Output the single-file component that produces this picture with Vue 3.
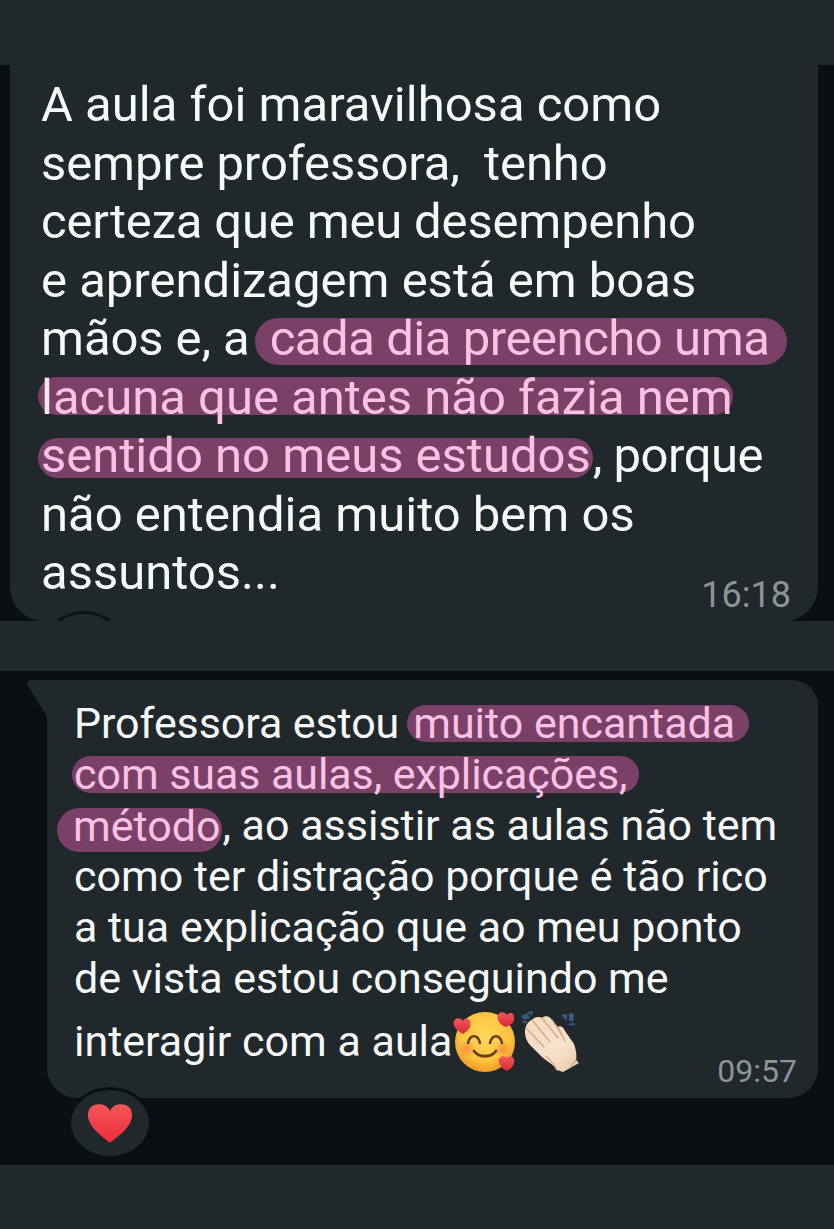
<script setup>
const firstLines = [
  { parts: [{ t: 'A aula foi maravilhosa como' }] },
  { parts: [{ t: 'sempre professora,  tenho' }], fit: 'tight-s' },
  { parts: [{ t: 'certeza que meu desempenho' }], fit: 'tight-m' },
  { parts: [{ t: 'e aprendizagem está em boas' }] },
  { parts: [{ t: 'mãos e, a', fit: 'tight-s' }, { t: 'cada dia preencho uma', h: 'p-cada' }] },
  { parts: [{ lead: 'l', t: 'acuna que antes não fazia nem', h: 'p-lacuna' }] },
  { parts: [{ t: 'sentido no meus estudos', h: 'p-sentido' }, { t: ', porque', fit: 'tight-l' }] },
  { parts: [{ t: 'não entendia muito bem os' }] },
  { parts: [{ t: 'assuntos...' }] }
]
const secondLines = [
  { parts: [{ t: 'Professora estou', fit: 'tight-s' }, { t: 'muito encantada', h: 'p-muito' }] },
  { parts: [{ t: 'com suas aulas, explicações,', h: 'p-com' }] },
  { parts: [{ t: 'método', h: 'p-metodo' }, { t: ', ao assistir as aulas não tem' }] },
  { parts: [{ t: 'como ter distração porque é tão rico' }] },
  { parts: [{ t: 'a tua explicação que ao meu ponto' }] },
  { parts: [{ t: 'de vista estou conseguindo me' }] }
]
</script>

<template>
  <div class="page">
    <div class="band top"></div>

    <section class="chat one">
      <div class="bubble first">
        <p v-for="(line, i) in firstLines" :key="i" class="line" :class="line.fit">
          <span v-for="(part, j) in line.parts" :key="j" :class="[part.h ? 'pill' : 'plain', part.h, part.fit]"><span v-if="part.lead" class="lead">{{ part.lead }}</span>{{ part.t }}</span>
        </p>
        <span class="time big">16:18</span>
        <span class="arc"></span>
      </div>
    </section>

    <div class="band middle"></div>

    <section class="chat two">
      <svg class="tail" viewBox="0 0 22 40" width="22" height="40" aria-hidden="true">
        <path d="M22 0H4C0 0 -1 3 1 6L22 40Z" fill="#20282c" />
      </svg>
      <div class="bubble second">
        <p v-for="(line, i) in secondLines" :key="i" class="line">
          <span v-for="(part, j) in line.parts" :key="j" :class="[part.h ? 'pill' : 'plain', part.h, part.fit]">{{ part.t }}</span>
        </p>
        <p class="line last">
          <span class="plain">interagir com a aula</span>
          <svg class="emoji" viewBox="22 10 140 70" width="140" height="70" aria-hidden="true">
            <defs>
              <radialGradient id="face" cx="50%" cy="40%" r="60%">
                <stop offset="0%" stop-color="#ffd95c" />
                <stop offset="70%" stop-color="#fcc23e" />
                <stop offset="100%" stop-color="#f19a2a" />
              </radialGradient>
              <radialGradient id="blush" cx="50%" cy="50%" r="50%">
                <stop offset="0%" stop-color="#f58a3c" stop-opacity=".8" />
                <stop offset="100%" stop-color="#f58a3c" stop-opacity="0" />
              </radialGradient>
              <linearGradient id="smallHeart" x1="0" y1="0" x2="0" y2="1">
                <stop offset="0%" stop-color="#f4565c" />
                <stop offset="100%" stop-color="#d82a36" />
              </linearGradient>
              <linearGradient id="hand" x1="0" y1="0" x2="1" y2="1">
                <stop offset="0%" stop-color="#f3d9c0" />
                <stop offset="60%" stop-color="#f8e2cb" />
                <stop offset="100%" stop-color="#e9c7a8" />
              </linearGradient>
            </defs>
            <circle cx="55" cy="42" r="30" fill="url(#face)" />
            <circle cx="37" cy="49" r="9" fill="url(#blush)" />
            <circle cx="73" cy="49" r="9" fill="url(#blush)" />
            <path d="M38 43C40 34 48 34 50 43M60 43C62 34 70 34 72 43" fill="none" stroke="#6b3f12" stroke-width="2.6" stroke-linecap="round" />
            <path d="M44 51C49 58 61 58 66 51" fill="none" stroke="#6b3f12" stroke-width="2.8" stroke-linecap="round" />
            <path d="M33 34C26 30 22 25 24 21C26 17 31 18 33 21C34 18 39 17 40 22C42 27 38 31 33 34Z" fill="url(#smallHeart)" />
            <path d="M76 27C70 25 66 19 68 15C70 11 75 12 77 15C79 12 84 12 84 17C85 22 81 25 76 27Z" fill="url(#smallHeart)" />
            <path d="M77 71C71 68 68 63 69 59C71 55 75 56 77 58C79 55 84 56 84 60C85 65 82 68 77 71Z" fill="url(#smallHeart)" />
            <g fill="#39597f">
              <path d="M91 16L98 13L100 18L94 20Z" />
              <path d="M97 12L103 11L102 16Z" />
              <path d="M92 21L98 21L95 24Z" />
              <path d="M131 15L137 14L137 21Z" />
              <path d="M139 13L144 14L143 22L139 20Z" />
              <path d="M136 24L144 23L145 26Z" />
            </g>
            <path d="M95 32C95 26 98 21 102 20C104 17 109 16 112 18C115 15 120 16 122 20L128 27C131 25 134 28 135 31L144 44C146 50 147 55 146 60L149 63L133 72L127 70C124 65 118 62 112 57L100 45C96 40 95 36 95 32Z" fill="url(#hand)" />
            <g fill="none" stroke="#d3a98a" stroke-width="1.3" stroke-linecap="round">
              <path d="M102 20L120 42" />
              <path d="M112 18L128 38" />
              <path d="M97 29L114 47" />
              <path d="M122 20L133 37" />
              <path d="M127 70C124 64 120 60 116 56" />
              <path d="M146 60L141 66" />
              <path d="M128 27L135 41" />
            </g>
          </svg>
        </p>
        <span class="time small">09:57</span>
      </div>
      <div class="reaction">
        <svg viewBox="0 0 48 42" width="46" height="41" aria-hidden="true">
          <defs>
            <linearGradient id="bigHeart" x1="0" y1="0" x2="0" y2="1">
              <stop offset="0%" stop-color="#f4565a" />
              <stop offset="100%" stop-color="#ee2b39" />
            </linearGradient>
          </defs>
          <path d="M24 41C15 34 1 24 1 12C1 5 6 1 12 1C17 1 22 3 24 8C26 3 31 1 36 1C42 1 47 5 47 12C47 24 33 34 24 41Z" fill="url(#bigHeart)" />
        </svg>
      </div>
    </section>

    <div class="band bottom"></div>
  </div>
</template>

<style>
html,
body {
  margin: 0;
  background: #20282c;
}
</style>

<style scoped>
.page {
  width: 834px;
  height: 1229px;
  display: flex;
  flex-direction: column;
  overflow: hidden;
  background: #20282c;
  font-family: Roboto, "Liberation Sans", sans-serif;
  color: #f6f8f9;
}

.band {
  background: #20282c;
  flex: none;
}

.top {
  height: 65px;
}

.middle {
  height: 50px;
}

.bottom {
  flex: 1;
}

.chat {
  position: relative;
  flex: none;
  background: #0a0f11;
  overflow: hidden;
}

.one {
  height: 556px;
  padding: 0 16px 0 10px;
  box-sizing: border-box;
}

.two {
  height: 494px;
  padding: 9px 16px 0 47px;
  box-sizing: border-box;
}

.bubble {
  position: relative;
  background: #20282c;
  box-sizing: border-box;
}

.first {
  height: 100%;
  padding: 11px 0 0 31px;
  border-radius: 0 0 34px 34px;
  font-size: 49px;
}

.first .line {
  height: 58.5px;
  line-height: 58.5px;
}

.second {
  height: 418px;
  padding: 18px 0 0 27px;
  border-radius: 0 26px 30px 30px;
  font-size: 43px;
}

.second .line {
  height: 51px;
  line-height: 51px;
}

.line {
  margin: 0;
  display: flex;
  align-items: center;
  white-space: pre;
}

.second .last {
  height: 75px;
  line-height: 75px;
}

.plain {
  display: block;
}

.tight-s {
  letter-spacing: -0.09px;
}

.tight-m {
  letter-spacing: -0.16px;
}

.tight-l {
  letter-spacing: -0.5px;
}

.pill {
  display: block;
  background: #7a4068;
  color: #f9c2e5;
  border-radius: 24px;
  line-height: 20px !important;
}

.lead {
  color: #f6e6f0;
}

.p-cada {
  margin: 5px 0 0 5px;
  padding: 11px 18px 16px 15px;
  letter-spacing: -0.45px;
}

.p-lacuna {
  margin: 0 0 4px -3px;
  padding: 11px 0 7px 3px;
}

.p-sentido {
  margin: 4px 0 0 -3px;
  padding: 8px 2px 12px 3px;
}

.p-muito {
  margin: 0 0 0 8px;
  padding: 8px 14px 9px 6px;
}

.p-com {
  margin: 0 0 0 -2px;
  padding: 8px 12px 9px 2px;
  letter-spacing: -0.07px;
}

.p-metodo {
  margin: 8px 0 0 -17px;
  padding: 8px 2px 16px 16px;
}

.emoji {
  flex: none;
  margin-top: 7px;
}

.time {
  position: absolute;
  color: #8b9497;
  line-height: 1;
}

.big {
  right: 27px;
  bottom: 8px;
  font-size: 36px;
}

.small {
  right: 21px;
  bottom: 11px;
  font-size: 32px;
}

.arc {
  position: absolute;
  left: 35px;
  top: 546px;
  width: 78px;
  height: 68px;
  border: 3px solid #0c1113;
  border-radius: 50%;
  box-sizing: border-box;
}

.tail {
  position: absolute;
  left: 27px;
  top: 9px;
}

.reaction {
  position: absolute;
  left: 68px;
  top: 416px;
  width: 84px;
  height: 72px;
  border: 3px solid #0a0f11;
  border-radius: 50%;
  background: #20282c;
  box-sizing: border-box;
  display: flex;
  align-items: center;
  justify-content: center;
}
</style>
